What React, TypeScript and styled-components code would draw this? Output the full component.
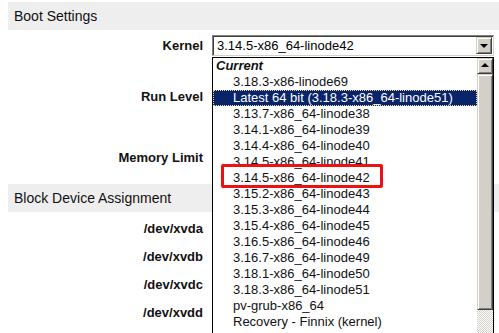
import React from "react";
import styled, { createGlobalStyle } from "styled-components";

const GlobalStyle = createGlobalStyle`
  html, body {
    margin: 0;
    padding: 0;
    height: 100%;
    overflow: hidden;
    background: #fff;
  }
  body {
    font-family: "Liberation Sans", Arial, sans-serif;
    color: #000;
  }
`;

const kernels = [
  "3.18.3-x86-linode69",
  "Latest 64 bit (3.18.3-x86_64-linode51)",
  "3.13.7-x86_64-linode38",
  "3.14.1-x86_64-linode39",
  "3.14.4-x86_64-linode40",
  "3.14.5-x86_64-linode41",
  "3.14.5-x86_64-linode42",
  "3.15.2-x86_64-linode43",
  "3.15.3-x86_64-linode44",
  "3.15.4-x86_64-linode45",
  "3.16.5-x86_64-linode46",
  "3.16.7-x86_64-linode49",
  "3.18.1-x86_64-linode50",
  "3.18.3-x86_64-linode51",
  "pv-grub-x86_64",
  "Recovery - Finnix (kernel)",
];

const App = () => {
  return (
    <>
      <GlobalStyle />
      <Page>
        <SectionHeader>Boot Settings</SectionHeader>
        <Row $height={26} $top={2}>
          <Label>Kernel</Label>
          <Control>
            <SelectBox>
              <SelectValue>3.14.5-x86_64-linode42</SelectValue>
              <ArrowButton>
                <Triangle $down />
              </ArrowButton>
            </SelectBox>
            <DropList>
              <Options>
                <Group>Current</Group>
                {kernels.map((k, i) => (
                  <Option key={k + i} $selected={i === 1}>
                    {k}
                  </Option>
                ))}
                <Group>Deprecated</Group>
              </Options>
              <ScrollBar>
                <ArrowButton $square>
                  <Triangle />
                </ArrowButton>
                <Thumb />
                <Track />
              </ScrollBar>
              <Marker />
            </DropList>
          </Control>
        </Row>
        <Row $height={76}>
          <Label>Run Level</Label>
        </Row>
        <Row $height={46}>
          <Label>Memory Limit</Label>
        </Row>

        <SectionHeader $top={4}>Block Device Assignment</SectionHeader>
        <Row $height={28} $top={2}>
          <Label>/dev/xvda</Label>
        </Row>
        <Row $height={28}>
          <Label>/dev/xvdb</Label>
        </Row>
        <Row $height={28}>
          <Label>/dev/xvdc</Label>
        </Row>
        <Row $height={28}>
          <Label>/dev/xvdd</Label>
        </Row>
      </Page>
    </>
  );
};

export default App;

const Page = styled.div`
  padding: 2px 0 0 8px;
  display: flex;
  flex-direction: column;
`;

const SectionHeader = styled.div<{ $top?: number }>`
  height: 28px;
  margin-top: ${(p) => p.$top || 0}px;
  background: #eeeeee;
  display: flex;
  align-items: center;
  padding-left: 6px;
  font-size: 14px;
  color: #111;
`;

const Row = styled.div<{ $height: number; $top?: number }>`
  height: ${(p) => p.$height}px;
  margin-top: ${(p) => p.$top || 0}px;
  display: flex;
  align-items: center;
  gap: 9px;
`;

const Label = styled.div`
  width: 195px;
  text-align: right;
  font-weight: bold;
  font-size: 13px;
  color: #111;
`;

const Control = styled.div`
  position: relative;
  width: 282px;
`;

const SelectBox = styled.div`
  height: 21px;
  box-sizing: border-box;
  border-top: 1px solid #808080;
  border-left: 1px solid #808080;
  border-right: 1px solid #d4d0c8;
  border-bottom: 1px solid #d4d0c8;
  box-shadow: inset 1px 1px 0 #404040;
  background: #fff;
  display: flex;
  align-items: center;
  justify-content: space-between;
  padding: 0 1px 0 4px;
`;

const SelectValue = styled.span`
  font-size: 13px;
`;

const ArrowButton = styled.div<{ $square?: boolean }>`
  width: 16px;
  height: ${(p) => (p.$square ? 16 : 17)}px;
  box-sizing: border-box;
  flex-shrink: 0;
  background: #d4d0c8;
  border-top: 1px solid #d4d0c8;
  border-left: 1px solid #d4d0c8;
  border-right: 1px solid #404040;
  border-bottom: 1px solid #404040;
  box-shadow: inset 1px 1px 0 #fff, inset -1px -1px 0 #808080;
  display: flex;
  align-items: center;
  justify-content: center;
`;

const Triangle = styled.div<{ $down?: boolean }>`
  width: 0;
  height: 0;
  border-left: 4px solid transparent;
  border-right: 4px solid transparent;
  ${(p) =>
    p.$down
      ? "border-top: 4px solid #000; margin-top: 1px;"
      : "border-bottom: 4px solid #000; margin-top: -1px;"}
`;

const DropList = styled.div`
  position: absolute;
  top: 22px;
  left: 0;
  width: 282px;
  height: 300px;
  box-sizing: border-box;
  border: 1px solid #000;
  background: #fff;
  display: flex;
`;

const Options = styled.div`
  flex: 1;
  display: flex;
  flex-direction: column;
  overflow: hidden;
`;

const Group = styled.div`
  height: 16px;
  line-height: 16px;
  padding-left: 3px;
  font-size: 13px;
  font-weight: bold;
  font-style: italic;
  color: #111;
  flex-shrink: 0;
`;

const Option = styled.div<{ $selected?: boolean }>`
  height: 16px;
  line-height: 16px;
  padding-left: 20px;
  font-size: 13px;
  flex-shrink: 0;
  white-space: nowrap;
  color: ${(p) => (p.$selected ? "#fff" : "#111")};
  background: ${(p) => (p.$selected ? "#0a246a" : "transparent")};
  outline: ${(p) => (p.$selected ? "1px dotted #e8d890" : "none")};
  outline-offset: -1px;
`;

const ScrollBar = styled.div`
  width: 16px;
  display: flex;
  flex-direction: column;
`;

const Thumb = styled.div`
  height: 236px;
  box-sizing: border-box;
  background: #d4d0c8;
  border-top: 1px solid #d4d0c8;
  border-left: 1px solid #d4d0c8;
  border-right: 1px solid #404040;
  border-bottom: 1px solid #404040;
  box-shadow: inset 1px 1px 0 #fff, inset -1px -1px 0 #808080;
`;

const Track = styled.div`
  flex: 1;
  background: repeating-conic-gradient(#d4d0c8 0 25%, #fff 0 50%) 0 0 / 2px 2px;
`;

const Marker = styled.div`
  position: absolute;
  left: 8px;
  top: 106px;
  width: 162px;
  height: 24px;
  box-sizing: border-box;
  border: 3px solid #ee1111;
  border-radius: 2px;
  pointer-events: none;
`;
